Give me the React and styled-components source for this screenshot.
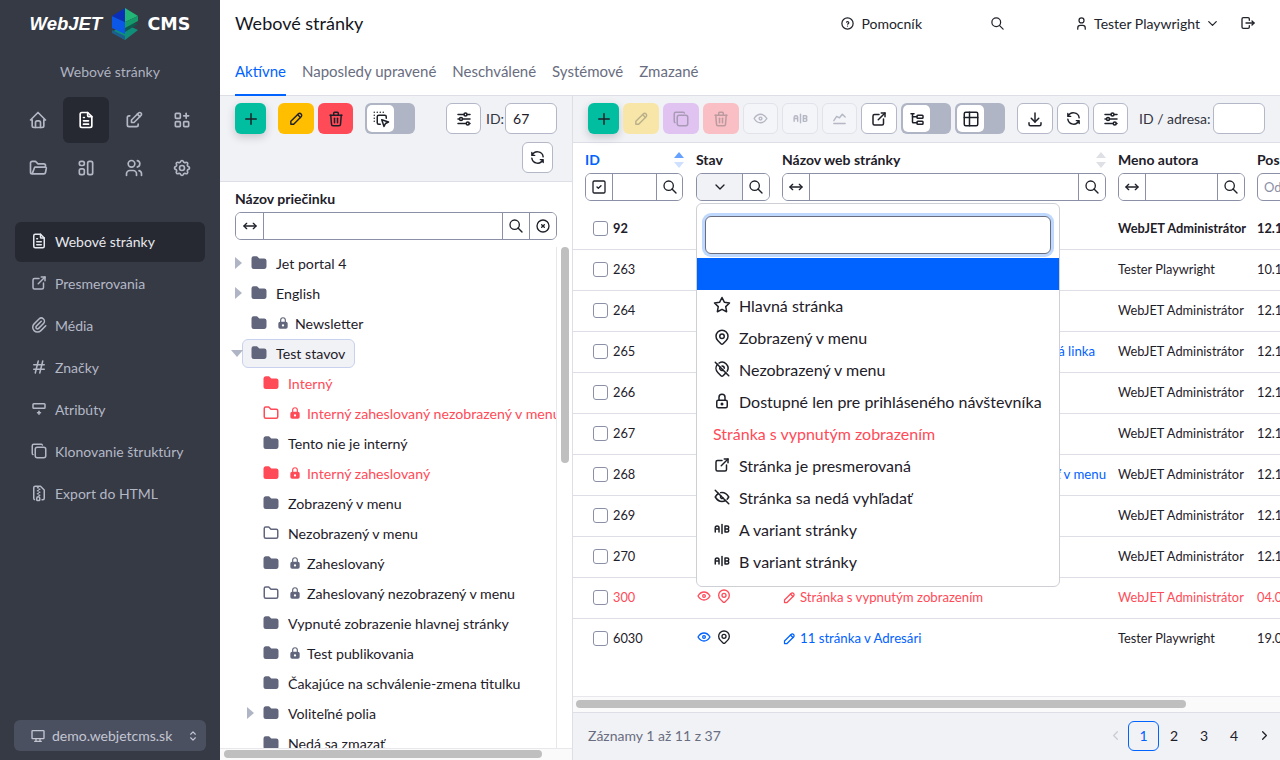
import React from "react";
import styled, { createGlobalStyle } from "styled-components";
import {
  TbAB,
  TbAdjustmentsHorizontal,
  TbApps,
  TbArrowsHorizontal,
  TbChartLine,
  TbChevronDown,
  TbChevronLeft,
  TbChevronRight,
  TbCircleX,
  TbCopy,
  TbDeviceDesktop,
  TbDownload,
  TbDragDrop,
  TbEdit,
  TbExternalLink,
  TbEye,
  TbEyeOff,
  TbFileText,
  TbFileZip,
  TbFolder,
  TbFolderFilled,
  TbFolderOpen,
  TbHash,
  TbHelpCircle,
  TbHome,
  TbLayout,
  TbLock,
  TbLockFilled,
  TbLogout,
  TbMapPin,
  TbMapPinOff,
  TbPaperclip,
  TbPencil,
  TbPlus,
  TbRefresh,
  TbRowInsertBottom,
  TbSearch,
  TbSelector,
  TbSquareCheck,
  TbStar,
  TbSubtask,
  TbTable,
  TbTrash,
  TbUser,
  TbUsers,
  TbSettings,
} from "react-icons/tb";

const GlobalStyle = createGlobalStyle`
  * { box-sizing: border-box; }
  html, body { margin: 0; padding: 0; background: #ffffff; }
  body {
    font-family: "Lato", "Noto Sans", sans-serif;
    font-size: 14px;
    color: #1e2029;
  }
`;

const Page = styled.div`
  display: flex;
  width: 1280px;
  height: 760px;
  overflow: hidden;
`;

/* sidebar */
const Sidebar = styled.aside`
  width: 220px;
  flex: none;
  display: flex;
  flex-direction: column;
  background: #363a45;
  color: #b4b8c6;
`;

const LogoRow = styled.div`
  height: 48px;
  display: flex;
  align-items: center;
  justify-content: center;
  gap: 8px;
  color: #ffffff;
`;

const LogoWeb = styled.span`
  font-family: "Liberation Sans", sans-serif;
  font-weight: 700;
  font-style: italic;
  font-size: 18.5px;
  width: 73px;
  white-space: nowrap;
`;

const LogoCms = styled.span`
  font-family: "DejaVu Sans", sans-serif;
  font-weight: 700;
  font-size: 17.5px;
  width: 43px;
  margin-left: 1px;
`;

const SectionTitle = styled.div`
  height: 48px;
  padding-bottom: 2px;
  display: flex;
  align-items: center;
  justify-content: center;
  font-size: 14px;
  color: #aeb2c0;
`;

const IconGrid = styled.div`
  display: grid;
  grid-template-columns: repeat(4, 48px);
  grid-auto-rows: 48px;
  padding-left: 14px;
`;

const IconCell = styled.div`
  display: flex;
  align-items: center;
  justify-content: center;
  border-radius: 6px;
  margin: 1px;
  color: ${(p) => (p.$active ? "#ffffff" : "#b4b8c6")};
  background: ${(p) => (p.$active ? "#262932" : "transparent")};
`;

const NavList = styled.nav`
  display: flex;
  flex-direction: column;
  gap: 2px;
  margin-top: 30px;
  padding: 0 15px;
`;

const NavItem = styled.div`
  height: 40px;
  display: flex;
  align-items: center;
  gap: 7px;
  padding: 0 0 2px 15px;
  border-radius: 6px;
  color: ${(p) => (p.$active ? "#e6e8ee" : "#b4b8c6")};
  background: ${(p) => (p.$active ? "#262932" : "transparent")};
`;

const DomainBox = styled.div`
  height: 31px;
  margin: auto 14px 9px;
  display: flex;
  align-items: center;
  gap: 6px;
  padding: 0 6px 0 16px;
  border-radius: 6px;
  background: #4b5060;
  color: #c3c6d2;

  & > span {
    flex: 1;
  }
`;

/* main area */
const Main = styled.main`
  flex: 1;
  min-width: 0;
  display: flex;
  flex-direction: column;
`;

const Header = styled.header`
  height: 48px;
  display: flex;
  align-items: center;
  padding: 0 24px 2px 15px;
`;

const PageTitle = styled.h1`
  margin: 0;
  font-size: 18px;
  font-weight: 400;
  color: #14161d;
  flex: 1;
`;

const HeaderItem = styled.div`
  display: flex;
  align-items: center;
  gap: ${(p) => p.$gap || 6}px;
  margin-left: ${(p) => p.$left || 0}px;
  color: #22242c;
`;

const Tabs = styled.div`
  height: 48px;
  display: flex;
  gap: 16px;
  padding-left: 15px;
  border-bottom: 1px solid #dddee6;
`;

const Tab = styled.div`
  height: 48px;
  display: flex;
  align-items: center;
  font-size: 15px;
  color: ${(p) => (p.$active ? "#0062ff" : "#696d80")};
  border-bottom: 2px solid ${(p) => (p.$active ? "#0062ff" : "transparent")};
`;

const Panels = styled.div`
  flex: 1;
  min-height: 0;
  display: flex;
`;

const LeftPanel = styled.section`
  width: 353px;
  flex: none;
  display: flex;
  flex-direction: column;
  border-right: 1px solid #dddee6;
`;

const RightPanel = styled.section`
  flex: 1;
  min-width: 0;
  display: flex;
  flex-direction: column;
  position: relative;
`;

const Toolbar = styled.div`
  background: #f1f2f6;
  border-bottom: 1px solid #dddee6;
  padding: 7px 15px 8px;
  display: flex;
  flex-direction: column;
  gap: 8px;
`;

const ToolRow = styled.div`
  display: flex;
  align-items: center;
  justify-content: ${(p) => p.$justify || "flex-start"};
  padding-right: ${(p) => p.$right || 0}px;
  gap: 4px;
`;

const ToolBtn = styled.button`
  width: ${(p) => p.$w || 36}px;
  height: 31px;
  flex: none;
  padding: 0;
  display: flex;
  align-items: center;
  justify-content: center;
  margin-left: ${(p) => p.$left || 0}px;
  border-radius: 6px;
  border: 1px solid ${(p) => p.$border || "transparent"};
  background: ${(p) => p.$bg || "#ffffff"};
  color: ${(p) => p.$color || "#1e2029"};
  box-shadow: ${(p) => (p.$shadow ? "0 3px 8px rgba(30, 35, 50, 0.22)" : "none")};
`;

const OutlineBtn = styled(ToolBtn).attrs({ $border: "#b3b7c7" })``;

const GhostBtn = styled(ToolBtn).attrs({ $border: "#e2e3ea", $bg: "#f4f5f8", $color: "#b5b8c4" })``;

const Toggle = styled.div`
  width: 50px;
  height: 31px;
  flex: none;
  padding: 2px;
  margin-left: ${(p) => p.$left || 0}px;
  border-radius: 6px;
  background: #b0b5c5;
`;

const ToggleKnob = styled.div`
  width: 27px;
  height: 27px;
  border-radius: 5px;
  background: #ffffff;
  display: flex;
  align-items: center;
  justify-content: center;
  color: #1e2029;
`;

const ToolLabel = styled.span`
  margin-left: ${(p) => p.$left || 0}px;
  color: #33353f;
  white-space: nowrap;
`;

const ToolInput = styled.input`
  width: 52px;
  height: 31px;
  flex: none;
  margin-left: ${(p) => p.$left || 0}px;
  border: 1px solid #b3b7c7;
  border-radius: 6px;
  padding: 0 7px;
  font: inherit;
  color: #1e2029;
  background: #ffffff;
`;

/* folder tree */
const TreeHead = styled.div`
  padding: 8px 15px 7px;
`;

const ColumnTitle = styled.div`
  font-weight: 700;
  font-size: 14px;
  color: ${(p) => (p.$active ? "#0062ff" : "#1e2029")};
  white-space: nowrap;
`;

const FilterBox = styled.div`
  height: 28px;
  width: ${(p) => (p.$w ? `${p.$w}px` : "100%")};
  flex: none;
  display: flex;
  margin-top: ${(p) => p.$top || 0}px;
  border: 1px solid #8b90a7;
  border-radius: 6px;
  background: #ffffff;
  overflow: hidden;
`;

const FilterCell = styled.div`
  width: ${(p) => p.$w || 27}px;
  flex: ${(p) => (p.$grow ? 1 : "none")};
  display: flex;
  align-items: center;
  justify-content: center;
  gap: 2px;
  background: ${(p) => (p.$muted ? "#f1f2f6" : "#ffffff")};
  color: #1e2029;

  & + & {
    border-left: 1px solid #8b90a7;
  }
`;

const TreeWrap = styled.div`
  flex: 1;
  min-height: 0;
  display: flex;
  padding-right: 3px;
`;

const TreeScroll = styled.div`
  width: 337px;
  flex: none;
  overflow: hidden;
  border-right: 1px solid #e6e7ec;
  padding-top: 1px;
`;

const TreeRow = styled.div`
  height: 30px;
  display: flex;
  align-items: center;
  white-space: nowrap;
  font-size: 14.2px;
  padding-left: ${(p) => (p.$level ? 41 : 29)}px;
  position: relative;
  color: ${(p) => (p.$red ? "#ff4b58" : "#1e2029")};
`;

const TreeLabel = styled.span`
  display: flex;
  align-items: center;
  height: 29px;
  padding: 0 9px 0 7px;
  margin-left: -7px;
  gap: 8px;
  border-radius: 6px;
  border: 1px solid ${(p) => (p.$selected ? "#c8d2ee" : "transparent")};
  background: ${(p) => (p.$selected ? "#f1f2f6" : "transparent")};
`;

const LockedName = styled.span`
  display: flex;
  align-items: center;
  gap: 5px;
`;

const Arrow = styled.i`
  position: absolute;
  left: ${(p) => (p.$level ? 27 : 15)}px;
  top: 9px;
  border-style: solid;
  border-width: 6px 0 6px 7px;
  border-color: transparent transparent transparent #b0b5c5;
`;

const ArrowDown = styled.i`
  position: absolute;
  left: 11px;
  top: 12px;
  border-style: solid;
  border-width: 7px 6px 0;
  border-color: #b0b5c5 transparent transparent;
`;

const VBar = styled.div`
  width: 8px;
  height: 216px;
  margin-left: 4px;
  border-radius: 4px;
  background: #bfbfbf;
`;

const HBarTrack = styled.div`
  height: ${(p) => p.$h}px;
  flex: none;
  padding: ${(p) => p.$pad};
  background: #fafafa;
  border-top: 1px solid #e8e8ec;
`;

const HBar = styled.div`
  width: ${(p) => p.$w}px;
  height: 8px;
  border-radius: 4px;
  background: #bfbfbf;
`;

/* table */
const TableArea = styled.div`
  flex: 1;
  min-height: 0;
  overflow: hidden;
  padding-left: 12px;
`;

const TableInner = styled.div`
  width: 860px;
`;

const HeadRow = styled.div`
  display: grid;
  grid-template-columns: 111px 86px 336px 139px 140px;
  height: 66px;
  padding-top: 8px;
`;

const HeadCell = styled.div`
  position: relative;
  padding-right: 12px;
`;

const SortMark = styled.i`
  position: absolute;
  right: ${(p) => p.$right}px;
  top: ${(p) => (p.$down ? 11 : 1)}px;
  border-style: solid;
  border-width: ${(p) => (p.$down ? "6px 5px 0" : "0 5px 6px")};
  border-color: ${(p) => (p.$down ? `${p.$color} transparent transparent` : `transparent transparent ${p.$color}`)};
`;

const DateInput = styled.input`
  width: 60px;
  height: 28px;
  margin-top: 5px;
  border: 1px solid #8b90a7;
  border-radius: 6px 0 0 6px;
  padding: 0 6px;
  font: inherit;
  font-size: 13px;

  &::placeholder {
    color: #8b90a7;
  }
`;

const DataRow = styled.div`
  display: grid;
  grid-template-columns: 111px 86px 336px 139px 140px;
  align-items: center;
  height: 41px;
  padding: 0 0 2px 12px;
  margin-left: -12px;
  font-size: 12.8px;
  font-weight: ${(p) => (p.$bold ? 700 : 400)};
  color: ${(p) => (p.$red ? "#ff4b58" : "#1e2029")};
  border-bottom: 1px solid ${(p) => (p.$last ? "transparent" : "#dddee6")};
`;

const IdCell = styled.div`
  display: flex;
  align-items: center;
  gap: 5px;
  padding-left: 8px;
`;

const Check = styled.span`
  width: 15px;
  height: 15px;
  border: 1.5px solid #8b90a7;
  border-radius: 3px;
  background: #ffffff;
`;

const StateCell = styled.div`
  display: flex;
  align-items: center;
  gap: 4px;
  margin-top: -3px;
  color: ${(p) => (p.$red ? "#ff4b58" : "#1e2029")};
`;

const NameCell = styled.div`
  display: flex;
  align-items: center;
  gap: 3px;
  white-space: nowrap;
  overflow: hidden;
  font-size: 13.2px;
  padding-right: ${(p) => p.$tailGap || 12}px;
  justify-content: ${(p) => (p.$end ? "flex-end" : "flex-start")};
  color: ${(p) => (p.$red ? "#ff4b58" : "#0062ff")};
`;

const Cell = styled.div`
  white-space: nowrap;
`;

const Dropdown = styled.div`
  position: absolute;
  left: 123px;
  top: 107px;
  width: 364px;
  height: 384px;
  background: #ffffff;
  border: 1px solid #cfd0d6;
  border-radius: 6px;
  z-index: 5;
  overflow: hidden;
`;

const DropSearch = styled.input`
  display: block;
  width: 346px;
  height: 38px;
  margin: 12px 0 4px 8px;
  border: 1px solid #696d80;
  border-radius: 6px;
  box-shadow: 0 0 0 3px #bfd8fd;
  background: #ffffff;
  outline: none;
`;

const DropActive = styled.div`
  height: 32px;
  background: #0062ff;
`;

const DropItem = styled.div`
  height: 32px;
  display: flex;
  align-items: center;
  gap: 8px;
  padding: 0 0 2px 16px;
  font-size: 16px;
  white-space: nowrap;
  color: ${(p) => (p.$red ? "#ff4b58" : "#1e2029")};
`;

const Footer = styled.div`
  height: 48px;
  flex: none;
  display: flex;
  align-items: center;
  justify-content: space-between;
  padding: 0 1px 2px 15px;
  background: #f1f2f6;
  border-top: 1px solid #dddee6;
  color: #696d80;
`;

const Pager = styled.div`
  display: flex;
  align-items: center;
`;

const PageNum = styled.div`
  width: ${(p) => (p.$arrow ? 20 : p.$active ? 31 : 30)}px;
  height: 30px;
  margin-left: ${(p) => (p.$active ? 3 : 0)}px;
  display: flex;
  align-items: center;
  justify-content: center;
  border-radius: 6px;
  border: 1px solid ${(p) => (p.$active ? "#0062ff" : "transparent")};
  color: ${(p) => (p.$active ? "#0062ff" : p.$dim ? "#c9ccd6" : "#1e2029")};
`;

const navItems = [
  { icon: TbFileText, label: "Webové stránky", active: true },
  { icon: TbExternalLink, label: "Presmerovania" },
  { icon: TbPaperclip, label: "Média" },
  { icon: TbHash, label: "Značky" },
  { icon: TbRowInsertBottom, label: "Atribúty" },
  { icon: TbCopy, label: "Klonovanie štruktúry" },
  { icon: TbFileZip, label: "Export do HTML" },
];

const gridIcons = [TbHome, TbFileText, TbEdit, TbApps, TbFolderOpen, TbLayout, TbUsers, TbSettings];

const tabs = ["Aktívne", "Naposledy upravené", "Neschválené", "Systémové", "Zmazané"];

const treeRows = [
  { label: "Jet portal 4", arrow: true },
  { label: "English", arrow: true },
  { label: "Newsletter", lock: true },
  { label: "Test stavov", open: true, selected: true },
  { label: "Interný", level: 1, red: true },
  { label: "Interný zaheslovaný nezobrazený v menu", level: 1, red: true, lock: true, outline: true },
  { label: "Tento nie je interný", level: 1 },
  { label: "Interný zaheslovaný", level: 1, red: true, lock: true },
  { label: "Zobrazený v menu", level: 1 },
  { label: "Nezobrazený v menu", level: 1, outline: true },
  { label: "Zaheslovaný", level: 1, lock: true },
  { label: "Zaheslovaný nezobrazený v menu", level: 1, lock: true, outline: true },
  { label: "Vypnuté zobrazenie hlavnej stránky", level: 1 },
  { label: "Test publikovania", level: 1, lock: true },
  { label: "Čakajúce na schválenie-zmena titulku", level: 1 },
  { label: "Voliteľné polia", level: 1, arrow: true },
  { label: "Nedá sa zmazať", level: 1 },
];

const ADMIN = "WebJET Administrátor";

const tableRows = [
  { id: 92, author: ADMIN, date: "12.12.2023", bold: true },
  { id: 263, author: "Tester Playwright", date: "10.12.2023" },
  { id: 264, author: ADMIN, date: "12.12.2023" },
  { id: 265, author: ADMIN, date: "12.12.2023", tail: "á linka", tailGap: 23 },
  { id: 266, author: ADMIN, date: "12.12.2023" },
  { id: 267, author: ADMIN, date: "12.12.2023" },
  { id: 268, author: ADMIN, date: "12.12.2023", tail: "ť v menu" },
  { id: 269, author: ADMIN, date: "12.12.2023" },
  { id: 270, author: ADMIN, date: "12.12.2023" },
  { id: 300, author: ADMIN, date: "04.01.2024", name: "Stránka s vypnutým zobrazením", red: true },
  { id: 6030, author: "Tester Playwright", date: "19.01.2024", name: "11 stránka v Adresári", last: true },
];

const menuItems = [
  { icon: TbStar, label: "Hlavná stránka" },
  { icon: TbMapPin, label: "Zobrazený v menu" },
  { icon: TbMapPinOff, label: "Nezobrazený v menu" },
  { icon: TbLock, label: "Dostupné len pre prihláseného návštevníka" },
  { label: "Stránka s vypnutým zobrazením", red: true },
  { icon: TbExternalLink, label: "Stránka je presmerovaná" },
  { icon: TbEyeOff, label: "Stránka sa nedá vyhľadať" },
  { icon: TbAB, label: "A variant stránky" },
  { icon: TbAB, label: "B variant stránky" },
];

const LogoCube = () => (
  <svg width="28" height="32" viewBox="0 0 28 32">
    <polygon points="14,16 27,22 14,32 1,24" fill="#0f8f7a" />
    <polygon points="1,22 14,28 14,32 1,25" fill="#1a5f8f" />
    <polygon points="1,8 14,14 14,26 1,20" fill="#0b58e8" />
    <polygon points="14,14 27,16 14,24" fill="#0c5a50" />
    <polygon points="14,0 1,8 14,14" fill="#0c2fb8" />
    <polygon points="14,0 27,8 14,14" fill="#23b777" />
    <polygon points="14,14 27,8 27,13 14,20" fill="#159a6c" />
  </svg>
);

const Filter = ({ w, icon, top = 5 }) => (
  <FilterBox $w={w} $top={top}>
    <FilterCell $w={26}>{icon}</FilterCell>
    <FilterCell $grow />
    <FilterCell>
      <TbSearch size={16} />
    </FilterCell>
  </FilterBox>
);

const App = () => (
  <Page>
    <GlobalStyle />
    <Sidebar>
      <LogoRow>
        <LogoWeb>WebJET</LogoWeb>
        <LogoCube />
        <LogoCms>CMS</LogoCms>
      </LogoRow>
      <SectionTitle>Webové stránky</SectionTitle>
      <IconGrid>
        {gridIcons.map((Icon, i) => (
          <IconCell key={i} $active={i === 1}>
            <Icon size={20} />
          </IconCell>
        ))}
      </IconGrid>
      <NavList>
        {navItems.map(({ icon: Icon, label, active }) => (
          <NavItem key={label} $active={active}>
            <Icon size={18} />
            {label}
          </NavItem>
        ))}
      </NavList>
      <DomainBox>
        <TbDeviceDesktop size={16} />
        <span>demo.webjetcms.sk</span>
        <TbSelector size={14} />
      </DomainBox>
    </Sidebar>

    <Main>
      <Header>
        <PageTitle>Webové stránky</PageTitle>
        <HeaderItem>
          <TbHelpCircle size={15} />
          Pomocník
        </HeaderItem>
        <HeaderItem $left={68}>
          <TbSearch size={15} />
        </HeaderItem>
        <HeaderItem $left={69} $gap={5}>
          <TbUser size={15} />
          Tester Playwright
          <TbChevronDown size={15} />
        </HeaderItem>
        <HeaderItem $left={20}>
          <TbLogout size={16} />
        </HeaderItem>
      </Header>
      <Tabs>
        {tabs.map((t, i) => (
          <Tab key={t} $active={i === 0}>
            {t}
          </Tab>
        ))}
      </Tabs>
      <Panels>
        <LeftPanel>
          <Toolbar>
            <ToolRow>
              <ToolBtn $w={31} $bg="#00be9f" $shadow>
                <TbPlus size={18} />
              </ToolBtn>
              <ToolBtn $left={8} $bg="#ffbe00">
                <TbPencil size={17} />
              </ToolBtn>
              <ToolBtn $w={35} $bg="#ff4b58">
                <TbTrash size={18} />
              </ToolBtn>
              <Toggle $left={8}>
                <ToggleKnob>
                  <TbDragDrop size={18} />
                </ToggleKnob>
              </Toggle>
              <OutlineBtn $left={27} $w={35}>
                <TbAdjustmentsHorizontal size={18} />
              </OutlineBtn>
              <ToolLabel $left={1}>ID:</ToolLabel>
              <ToolInput $left={-3} defaultValue="67" />
            </ToolRow>
            <ToolRow $justify="flex-end" $right={4}>
              <OutlineBtn $w={31}>
                <TbRefresh size={17} />
              </OutlineBtn>
            </ToolRow>
          </Toolbar>
          <TreeHead>
            <ColumnTitle>Názov priečinku</ColumnTitle>
            <FilterBox $top={5}>
              <FilterCell>
                <TbArrowsHorizontal size={16} />
              </FilterCell>
              <FilterCell $grow />
              <FilterCell>
                <TbSearch size={16} />
              </FilterCell>
              <FilterCell>
                <TbCircleX size={16} />
              </FilterCell>
            </FilterBox>
          </TreeHead>
          <TreeWrap>
            <TreeScroll>
              {treeRows.map((r) => {
                const FolderIcon = r.outline ? TbFolder : TbFolderFilled;
                const folderColor = r.red ? "#ff4b58" : "#62667c";
                return (
                  <TreeRow key={r.label} $level={r.level} $red={r.red}>
                    {r.arrow && <Arrow $level={r.level} />}
                    {r.open && <ArrowDown />}
                    <TreeLabel $selected={r.selected}>
                      <FolderIcon size={18} color={folderColor} />
                      {r.lock ? (
                        <LockedName>
                          <TbLockFilled size={14} color={r.red ? "#ff4b58" : "#62667c"} />
                          {r.label}
                        </LockedName>
                      ) : (
                        r.label
                      )}
                    </TreeLabel>
                  </TreeRow>
                );
              })}
            </TreeScroll>
            <VBar />
          </TreeWrap>
          <HBarTrack $h={12} $pad="1px 4px">
            <HBar $w={318} />
          </HBarTrack>
        </LeftPanel>

        <RightPanel>
          <Toolbar>
            <ToolRow>
              <ToolBtn $w={31} $bg="#00be9f" $shadow>
                <TbPlus size={18} />
              </ToolBtn>
              <ToolBtn $bg="#f8e6a9" $color="#b9b08a">
                <TbPencil size={17} />
              </ToolBtn>
              <ToolBtn $bg="#e0c3f1" $color="#a99ab6">
                <TbCopy size={18} />
              </ToolBtn>
              <ToolBtn $bg="#f9bfc4" $color="#bb9ba0">
                <TbTrash size={18} />
              </ToolBtn>
              <GhostBtn $w={35}>
                <TbEye size={17} />
              </GhostBtn>
              <GhostBtn>
                <TbAB size={17} />
              </GhostBtn>
              <GhostBtn $w={35}>
                <TbChartLine size={17} />
              </GhostBtn>
              <OutlineBtn>
                <TbExternalLink size={18} />
              </OutlineBtn>
              <Toggle>
                <ToggleKnob>
                  <TbSubtask size={18} />
                </ToggleKnob>
              </Toggle>
              <Toggle>
                <ToggleKnob>
                  <TbTable size={18} />
                </ToggleKnob>
              </Toggle>
              <OutlineBtn $left={8}>
                <TbDownload size={18} />
              </OutlineBtn>
              <OutlineBtn $w={32}>
                <TbRefresh size={17} />
              </OutlineBtn>
              <OutlineBtn $w={35}>
                <TbAdjustmentsHorizontal size={18} />
              </OutlineBtn>
              <ToolLabel $left={7}>ID / adresa:</ToolLabel>
              <ToolInput $left={-2} />
            </ToolRow>
          </Toolbar>
          <TableArea>
            <TableInner>
              <HeadRow>
                <HeadCell>
                  <ColumnTitle $active>ID</ColumnTitle>
                  <SortMark $color="#66a1ff" $right={12} />
                  <SortMark $color="#cfe0ff" $right={12} $down />
                  <FilterBox $w={98} $top={5}>
                    <FilterCell $w={26}>
                      <TbSquareCheck size={16} />
                    </FilterCell>
                    <FilterCell $grow />
                    <FilterCell $w={26}>
                      <TbSearch size={16} />
                    </FilterCell>
                  </FilterBox>
                </HeadCell>
                <HeadCell>
                  <ColumnTitle>Stav</ColumnTitle>
                  <FilterBox $w={74} $top={5}>
                    <FilterCell $grow $muted>
                      <TbChevronDown size={16} />
                    </FilterCell>
                    <FilterCell>
                      <TbSearch size={16} />
                    </FilterCell>
                  </FilterBox>
                </HeadCell>
                <HeadCell>
                  <ColumnTitle>Názov web stránky</ColumnTitle>
                  <SortMark $color="#dfe0e6" $right={12} />
                  <SortMark $color="#dfe0e6" $right={12} $down />
                  <Filter w={324} icon={<TbArrowsHorizontal size={16} />} />
                </HeadCell>
                <HeadCell>
                  <ColumnTitle>Meno autora</ColumnTitle>
                  <Filter w={127} icon={<TbArrowsHorizontal size={16} />} />
                </HeadCell>
                <HeadCell>
                  <ColumnTitle>Posledná zmena</ColumnTitle>
                  <DateInput placeholder="Od" />
                </HeadCell>
              </HeadRow>
              {tableRows.map((r) => (
                <DataRow key={r.id} $bold={r.bold} $red={r.red} $last={r.last}>
                  <IdCell>
                    <Check />
                    {r.id}
                  </IdCell>
                  <StateCell $red={r.red}>
                    {r.name && (
                      <>
                        <TbEye size={16} color={r.red ? "#ff4b58" : "#0062ff"} />
                        <TbMapPin size={16} />
                      </>
                    )}
                  </StateCell>
                  <NameCell $red={r.red} $end={r.tail} $tailGap={r.tailGap}>
                    {r.name && <TbPencil size={15} />}
                    {r.name || r.tail}
                  </NameCell>
                  <Cell>{r.author}</Cell>
                  <Cell>{r.date}</Cell>
                </DataRow>
              ))}
            </TableInner>
          </TableArea>
          <HBarTrack $h={16} $pad="3px 3px">
            <HBar $w={610} />
          </HBarTrack>
          <Footer>
            Záznamy 1 až 11 z 37
            <Pager>
              <PageNum $arrow $dim>
                <TbChevronLeft size={15} />
              </PageNum>
              <PageNum $active>1</PageNum>
              <PageNum>2</PageNum>
              <PageNum>3</PageNum>
              <PageNum>4</PageNum>
              <PageNum>
                <TbChevronRight size={15} />
              </PageNum>
            </Pager>
          </Footer>

          <Dropdown>
            <DropSearch />
            <DropActive />
            {menuItems.map(({ icon: Icon, label, red }) => (
              <DropItem key={label} $red={red}>
                {Icon && <Icon size={18} />}
                {label}
              </DropItem>
            ))}
          </Dropdown>
        </RightPanel>
      </Panels>
    </Main>
  </Page>
);

export default App;
